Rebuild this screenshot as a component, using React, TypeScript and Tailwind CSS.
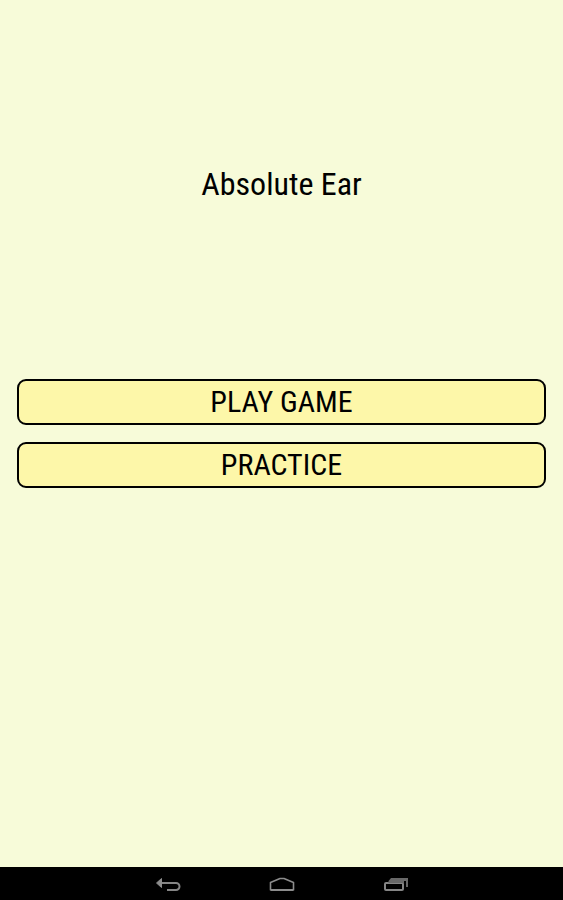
import React from 'react';

const menuItems = ['PLAY GAME', 'PRACTICE'];

// ========== SYSTEM BAR ICONS ==========

function BackIcon() {
  return (
    <svg viewBox="0 0 26 18" className="h-[18px] w-[26px]" fill="none" aria-hidden="true">
      <path d="M6 8H21A3.5 3.5 0 0 1 21 15H12" stroke="#858585" strokeWidth="2" />
      <path d="M1.5 8L6.5 3.5V12.5Z" fill="#8c8c8c" stroke="#8c8c8c" strokeLinejoin="round" />
    </svg>
  );
}

function HomeIcon() {
  return (
    <svg viewBox="0 0 26 18" className="h-[18px] w-[26px]" fill="none" aria-hidden="true">
      <path d="M1.5 15V7.5L11 3.5H15L24.5 7.5V15Z" stroke="#8c8c8c" strokeWidth="1.6" strokeLinejoin="round" />
      <path d="M2 15H24" stroke="#8c8c8c" strokeWidth="2" />
    </svg>
  );
}

function RecentIcon() {
  return (
    <svg viewBox="0 0 26 18" className="h-[18px] w-[26px]" fill="none" aria-hidden="true">
      <rect x="2" y="8" width="18" height="7" rx="1" stroke="#858585" strokeWidth="2" />
      <path d="M8 3H25V12H23V6H21V8H5.5V6Z" fill="#686868" />
    </svg>
  );
}

// ========== HOME SCREEN ==========

export default function App() {
  return (
    <div className="flex min-h-screen flex-col bg-[#f7fbd9] font-['Roboto_Condensed','Roboto',sans-serif] text-black">
      <main className="flex flex-1 flex-col px-[17px]">
        <h1 className="pt-[164px] text-center text-[32px] leading-[40px]">Absolute Ear</h1>

        <nav className="mt-[175px] flex flex-col gap-[17px]">
          {menuItems.map((item) => (
            <button
              key={item}
              type="button"
              className="h-[46px] rounded-[9px] border-2 border-black bg-[#fdf7a9] text-[30px] leading-[42px]"
            >
              {item}
            </button>
          ))}
        </nav>
      </main>

      <footer className="flex h-[33px] items-center justify-center gap-[88px] bg-black">
        <button type="button" aria-label="Back">
          <BackIcon />
        </button>
        <button type="button" aria-label="Home">
          <HomeIcon />
        </button>
        <button type="button" aria-label="Recent apps">
          <RecentIcon />
        </button>
      </footer>
    </div>
  );
}
